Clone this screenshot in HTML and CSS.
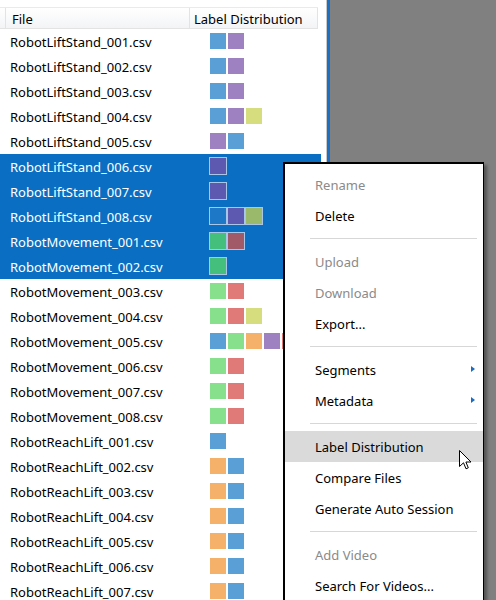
FILE: index.html
```html
<!DOCTYPE html>
<html>
<head>
<meta charset="utf-8">
<link rel="stylesheet" href="styles.css">
</head>
<body>
<div class="app">
  <div class="panel">
    <div class="header">
      <div class="hcell hpad"></div>
      <div class="hcell hfile">File</div>
      <div class="hcell hdist">Label Distribution</div>
    </div>
    <div class="rows">
      <div class="row"><span class="name">RobotLiftStand_001.csv</span><span class="dist"><i class="sq blue"></i><i class="sq purple"></i></span></div>
      <div class="row"><span class="name">RobotLiftStand_002.csv</span><span class="dist"><i class="sq blue"></i><i class="sq purple"></i></span></div>
      <div class="row"><span class="name">RobotLiftStand_003.csv</span><span class="dist"><i class="sq blue"></i><i class="sq purple"></i></span></div>
      <div class="row"><span class="name">RobotLiftStand_004.csv</span><span class="dist"><i class="sq blue"></i><i class="sq purple"></i><i class="sq yellow"></i></span></div>
      <div class="row"><span class="name">RobotLiftStand_005.csv</span><span class="dist"><i class="sq purple"></i><i class="sq blue"></i></span></div>
      <div class="row sel"><span class="name">RobotLiftStand_006.csv</span><span class="dist"><i class="sq s-purple"></i></span></div>
      <div class="row sel"><span class="name">RobotLiftStand_007.csv</span><span class="dist"><i class="sq s-purple"></i></span></div>
      <div class="row sel"><span class="name">RobotLiftStand_008.csv</span><span class="dist"><i class="sq s-blue"></i><i class="sq s-purple"></i><i class="sq s-olive"></i></span></div>
      <div class="row sel"><span class="name">RobotMovement_001.csv</span><span class="dist"><i class="sq s-green"></i><i class="sq s-red"></i></span></div>
      <div class="row sel"><span class="name">RobotMovement_002.csv</span><span class="dist"><i class="sq s-green"></i></span></div>
      <div class="row"><span class="name">RobotMovement_003.csv</span><span class="dist"><i class="sq green"></i><i class="sq red"></i></span></div>
      <div class="row"><span class="name">RobotMovement_004.csv</span><span class="dist"><i class="sq green"></i><i class="sq red"></i><i class="sq yellow"></i></span></div>
      <div class="row"><span class="name">RobotMovement_005.csv</span><span class="dist"><i class="sq blue"></i><i class="sq green"></i><i class="sq orange"></i><i class="sq purple"></i><i class="sq red"></i></span></div>
      <div class="row"><span class="name">RobotMovement_006.csv</span><span class="dist"><i class="sq green"></i><i class="sq red"></i></span></div>
      <div class="row"><span class="name">RobotMovement_007.csv</span><span class="dist"><i class="sq green"></i><i class="sq red"></i></span></div>
      <div class="row"><span class="name">RobotMovement_008.csv</span><span class="dist"><i class="sq green"></i><i class="sq red"></i></span></div>
      <div class="row"><span class="name">RobotReachLift_001.csv</span><span class="dist"><i class="sq blue"></i></span></div>
      <div class="row"><span class="name">RobotReachLift_002.csv</span><span class="dist"><i class="sq orange"></i><i class="sq blue"></i></span></div>
      <div class="row"><span class="name">RobotReachLift_003.csv</span><span class="dist"><i class="sq orange"></i><i class="sq blue"></i></span></div>
      <div class="row"><span class="name">RobotReachLift_004.csv</span><span class="dist"><i class="sq orange"></i><i class="sq blue"></i></span></div>
      <div class="row"><span class="name">RobotReachLift_005.csv</span><span class="dist"><i class="sq orange"></i><i class="sq blue"></i></span></div>
      <div class="row"><span class="name">RobotReachLift_006.csv</span><span class="dist"><i class="sq orange"></i><i class="sq blue"></i></span></div>
      <div class="row"><span class="name">RobotReachLift_007.csv</span><span class="dist"><i class="sq orange"></i><i class="sq blue"></i></span></div>
    </div>
  </div>
  <div class="divider"></div>
  <div class="desk"></div>
</div>

<div class="menu">
  <div class="item disabled">Rename</div>
  <div class="item">Delete</div>
  <div class="sep"></div>
  <div class="item disabled">Upload</div>
  <div class="item disabled">Download</div>
  <div class="item">Export...</div>
  <div class="sep"></div>
  <div class="item sub">Segments</div>
  <div class="item sub">Metadata</div>
  <div class="sep"></div>
  <div class="item hover">Label Distribution</div>
  <div class="item">Compare Files</div>
  <div class="item">Generate Auto Session</div>
  <div class="sep"></div>
  <div class="item disabled">Add Video</div>
  <div class="item">Search For Videos...</div>
</div>

<svg class="cursor" width="14" height="21" viewBox="0 0 14 21">
  <path d="M0.5 0.5 L0.5 16.5 L4.5 12.8 L7 18.8 L9.3 17.8 L6.9 12 L12 12 Z" fill="#fff" stroke="#000" stroke-width="1" stroke-linejoin="miter"/>
</svg>
</body>
</html>
```

FILE: styles.css
```css
html, body {
  margin: 0;
  padding: 0;
  width: 496px;
  height: 600px;
  overflow: hidden;
  background: #808080;
  font-family: "Segoe UI", "Noto Sans", "Open Sans", sans-serif;
  font-size: 13px;
  color: #000;
}

.app {
  display: flex;
  height: 600px;
}

.panel {
  width: 326px;
  flex: none;
  background: #fff;
  padding-top: 7px;
  box-sizing: border-box;
}

.divider {
  width: 4px;
  flex: none;
  background: #1a70c4;
  border-left: 1px solid #c9c9c9;
  box-sizing: border-box;
}

.desk {
  flex: 1;
  background: #808080;
}

.header {
  display: flex;
  height: 22px;
  width: 318px;
  box-sizing: border-box;
  border-top: 1px solid #eaeaea;
  border-bottom: 1px solid #e3e3e3;
  background: linear-gradient(#ffffff, #f3f4f6);
}

.hcell {
  display: flex;
  align-items: center;
  border-right: 1px solid #e3e3e3;
  box-sizing: border-box;
  padding-top: 1px;
}

.hpad { width: 6px; }
.hfile { width: 184px; padding-left: 6px; }
.hdist { flex: 1; padding-left: 4px; }

.rows {
  width: 321px;
}

.row {
  height: 25px;
  display: flex;
  align-items: center;
}

.row.sel {
  background: #0a6fc3;
  color: #fff;
}

.name {
  width: 200px;
  padding-left: 10px;
  padding-top: 1px;
  flex: none;
  white-space: nowrap;
}

.dist {
  display: flex;
  gap: 2px;
  margin-top: -1px;
}

.sq {
  display: block;
  width: 16px;
  height: 16px;
}

.blue { background: #5a9fd5; }
.purple { background: #9d81c1; }
.yellow { background: #d6dd7f; }
.green { background: #87e08b; }
.red { background: #df7a78; }
.orange { background: #f5b06a; }

.s-purple, .s-blue, .s-olive, .s-green, .s-red {
  outline: 1px solid #a9c6e6;
}
.s-purple { background: #5d58b0; }
.s-blue { background: #1e78c8; }
.s-olive { background: #9bb96b; }
.s-green { background: #45c07c; }
.s-red { background: #a15a68; }

.menu {
  position: absolute;
  left: 283px;
  top: 162px;
  width: 201px;
  box-sizing: border-box;
  background: #fff;
  border: 1px solid #000;
  border-left-width: 2px;
  border-top-width: 2px;
  padding: 5px 0 6px;
  box-shadow: 3px 3px 3px rgba(0, 0, 0, 0.35);
}

.item {
  height: 31px;
  display: flex;
  align-items: center;
  padding-left: 30px;
  padding-top: 1px;
  box-sizing: border-box;
  position: relative;
}

.item.disabled { color: #8a8a8a; }

.item.hover { background: #dadada; }

.item.sub::after {
  content: "";
  position: absolute;
  right: 8px;
  top: 12px;
  border-left: 4px solid #1b6cc0;
  border-top: 3.5px solid transparent;
  border-bottom: 3.5px solid transparent;
}

.sep {
  height: 15px;
  display: flex;
  align-items: center;
  padding-left: 25px;
  padding-right: 6px;
}

.sep::before {
  content: "";
  flex: 1;
  height: 1px;
  background: #d7d7d7;
}

.cursor {
  position: absolute;
  left: 459px;
  top: 450px;
}
```
